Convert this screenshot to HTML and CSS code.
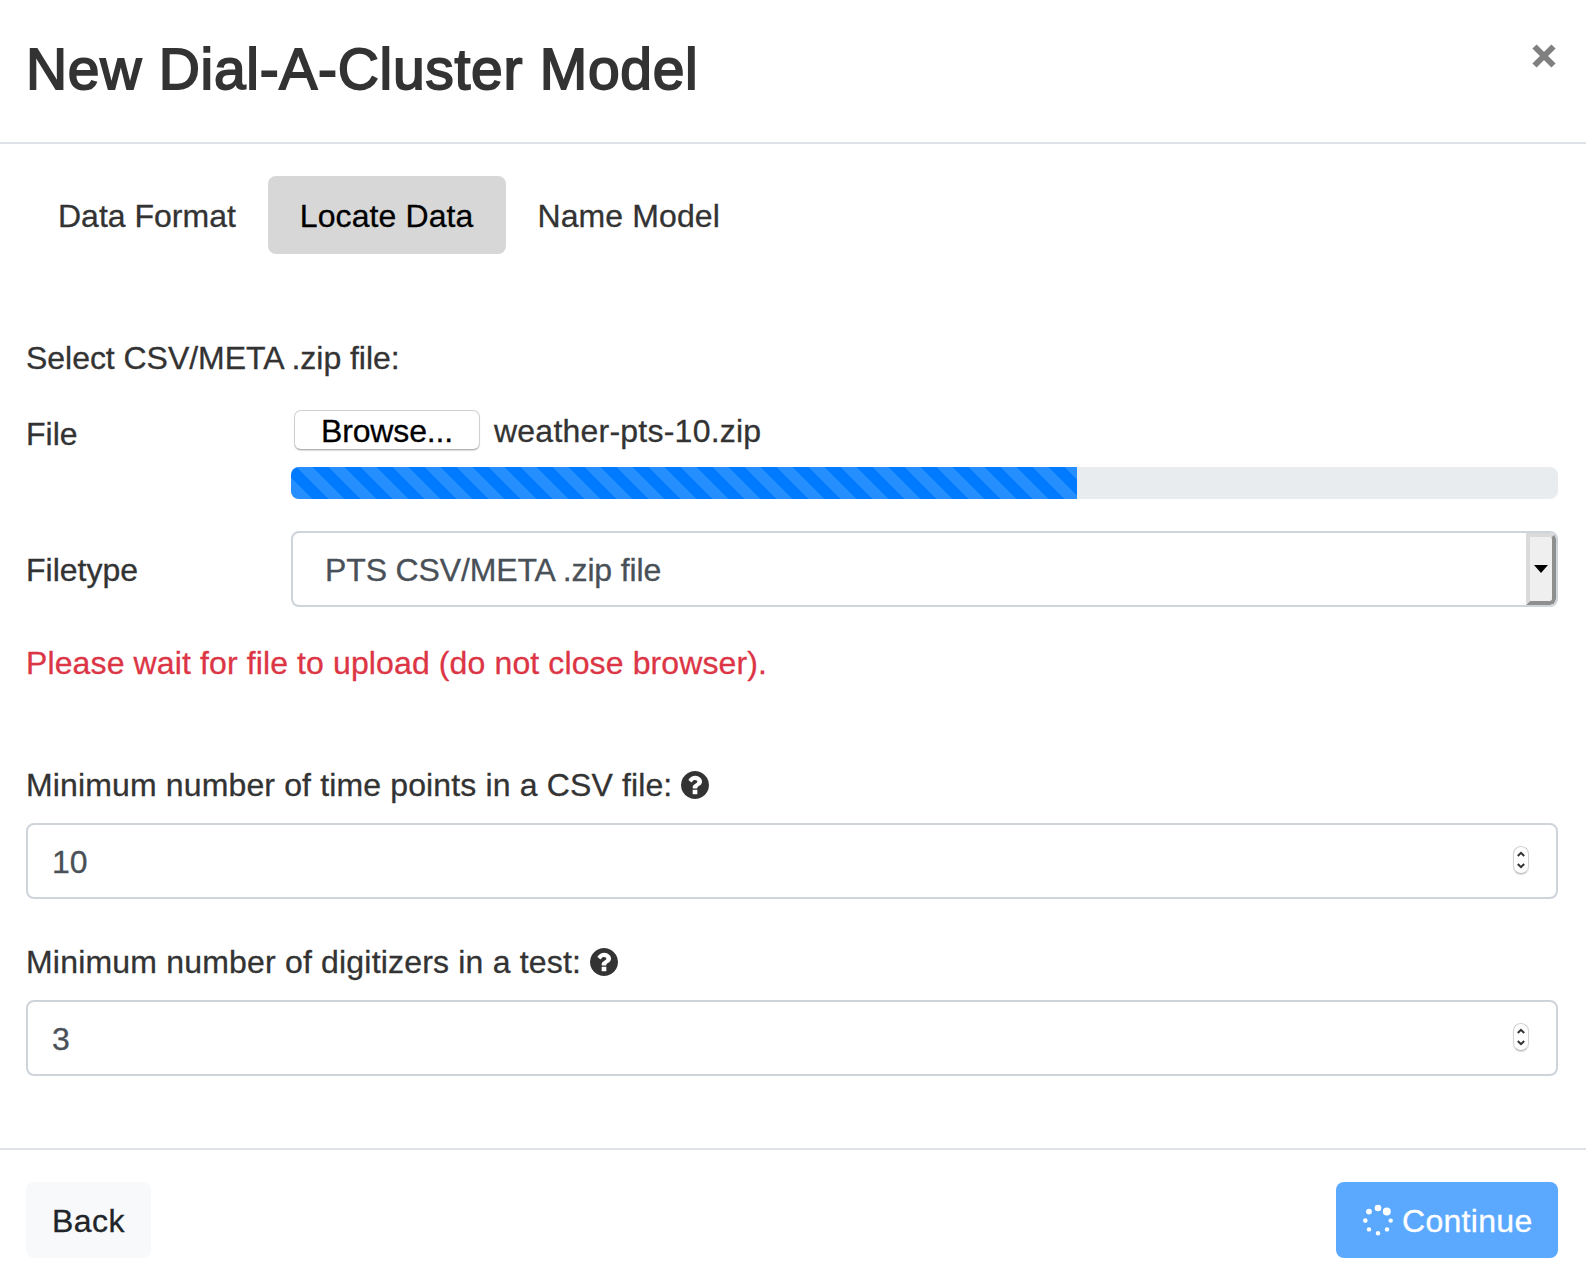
FILE: index.html
```html
<!DOCTYPE html>
<html lang="en">
<head>
<meta charset="utf-8">
<title>New Dial-A-Cluster Model</title>
<link rel="stylesheet" href="styles.css">
</head>
<body>
<div class="modal">
  <header class="modal-header">
    <h1 class="modal-title">New Dial-A-Cluster Model</h1>
    <button class="close" aria-label="Close"><svg width="24" height="24" viewBox="0 0 24 24"><path d="M2.500 2.500L21.500 21.500M21.500 2.500L2.500 21.500" stroke="#808080" stroke-width="6" fill="none"/></svg></button>
  </header>
  <main class="modal-body">
    <nav class="pills">
      <a class="pill format">Data Format</a>
      <a class="pill active">Locate Data</a>
      <a class="pill">Name Model</a>
    </nav>
    <p class="prompt">Select CSV/META .zip file:</p>
    <div class="row file-row">
      <span class="row-label">File</span>
      <div>
        <div class="file-input"><button class="browse">Browse...</button><span class="file-name">weather-pts-10.zip</span></div>
        <div class="progress"><div class="progress-bar" style="width: 62.04%"></div></div>
      </div>
    </div>
    <div class="row type-row">
      <span class="row-label">Filetype</span>
      <div class="select">
        <span class="select-value">PTS CSV/META .zip file</span>
        <span class="select-button"><svg width="14" height="8" viewBox="0 0 14 8"><path d="M0 0H14L7 8Z"/></svg></span>
      </div>
    </div>
    <p class="warning">Please wait for file to upload (do not close browser).</p>
    <div class="group">
      <label class="label points"><span>Minimum number of time points in a CSV file:</span><svg class="help" viewBox="128 128 1536 1536"><use href="#question"/></svg></label>
      <div class="number"><span>10</span><span class="stepper"><svg width="8" height="18" viewBox="0 0 8 18"><path d="M0.800 5L4 1.800L7.200 5M0.800 13L4 16.200L7.200 13"/></svg></span></div>
    </div>
    <div class="group">
      <label class="label digitizers"><span>Minimum number of digitizers in a test:</span><svg class="help" viewBox="128 128 1536 1536"><path id="question" d="M1024 1376v-192q0-14-9-23t-23-9h-192q-14 0-23 9t-9 23v192q0 14 9 23t23 9h192q14 0 23-9t9-23zm256-672q0-88-55.500-163t-138.500-116-170-41q-243 0-371 213-15 24 8 42l132 100q7 6 19 6 16 0 25-12 53-68 86-92 34-24 86-24 48 0 85.500 26t37.500 59q0 38-20 61t-68 45q-63 28-115.500 86.500t-52.500 125.500v36q0 14 9 23t23 9h192q14 0 23-9t9-23q0-19 21.500-49.500t54.500-49.500q32-18 49-28.500t46-35 44.500-48 28-60.500 12.500-81zm384 192q0 209-103 385.500t-279.500 279.500-385.500 103-385.500-103-279.500-279.500-103-385.500 103-385.500 279.500-279.500 385.500-103 385.500 103 279.500 279.500 103 385.500z"/></svg></label>
      <div class="number"><span>3</span><span class="stepper"><svg width="8" height="18" viewBox="0 0 8 18"><path d="M0.800 5L4 1.800L7.200 5M0.800 13L4 16.200L7.200 13"/></svg></span></div>
    </div>
  </main>
  <footer class="modal-footer">
    <button class="btn back"><span>Back</span></button>
    <button class="btn continue">
      <svg width="32" height="32" viewBox="0 0 32 32" fill="#fff"><circle cx="16" cy="4" r="3.300"/><circle cx="24.800" cy="7.600" r="4"/><circle cx="28.700" cy="16.600" r="2.200"/><circle cx="25" cy="25.400" r="2.200"/><circle cx="16" cy="29.300" r="2.200"/><circle cx="7" cy="25.400" r="2.200"/><circle cx="3.300" cy="16.600" r="2.300"/><circle cx="7" cy="7.600" r="2.900"/></svg>
      <span>Continue</span>
    </button>
  </footer>
</div>
</body>
</html>
```
FILE: styles.css
```css
* { box-sizing: border-box; }
body {
  margin: 0;
  background: #fff;
  color: #333;
  font: 32px/48px "Liberation Sans", Arial, sans-serif;
  -webkit-text-stroke: 0.3px currentColor;
}
button { font: inherit; border: 0; background: none; padding: 0; margin: 0; }
p { margin: 0; }
.modal { width: 1586px; height: 1284px; display: flex; flex-direction: column; overflow: hidden; }

.modal-header {
  height: 144px;
  padding: 27px 30px 0 26px;
  display: flex;
  justify-content: space-between;
  align-items: flex-start;
  border-bottom: 2px solid #dee2e6;
}
.modal-title {
  margin: 0;
  font-size: 57px;
  line-height: 84px;
  font-weight: 400;
  letter-spacing: 0.7px;
  -webkit-text-stroke: 1.8px #333;
}
.close { display: flex; margin-top: 17px; }

.modal-body { flex: 1; padding: 32px 28px 0 26px; }
.pills { display: flex; height: 78px; margin-bottom: 80px; }
.pill { padding: 16px 32px 14px; border-radius: 8px; letter-spacing: 0.1px; }
.pill.format { letter-spacing: 0; }
.pill.active { background: #d7d7d7; color: #000; }
.prompt { height: 48px; margin-bottom: 28px; letter-spacing: -0.04px; }

.row { display: grid; grid-template-columns: 265px 1fr; }
.file-input { display: flex; height: 57px; padding-left: 3px; }
.browse {
  width: 186px;
  height: 40px;
  line-height: 40px;
  margin-right: 14px;
  letter-spacing: -0.15px;
  color: #000;
  background: #fff;
  border: 1px solid #d0d0d0;
  border-bottom-color: #b4b4b4;
  border-radius: 7px;
  box-shadow: 0 1px 1px rgba(0, 0, 0, 0.15);
}
.file-name { margin-top: -3px; letter-spacing: 0.23px; }
.progress { height: 32px; border-radius: 8px; background: #e9ecef; overflow: hidden; }
.progress-bar {
  height: 100%;
  background-color: #007bff;
  background-image: linear-gradient(45deg, rgba(255, 255, 255, .15) 25%, transparent 25%, transparent 50%, rgba(255, 255, 255, .15) 50%, rgba(255, 255, 255, .15) 75%, transparent 75%, transparent);
  background-size: 32px 32px;
  background-position: 5px 0;
}
.type-row { margin-top: 32px; }
.type-row .row-label { padding-top: 15px; }
.select {
  height: 76px;
  display: flex;
  justify-content: space-between;
  border: 2px solid #ced4da;
  border-radius: 8px;
  color: #495057;
  overflow: hidden;
}
.select-value { padding: 13px 0 0 32px; letter-spacing: -0.13px; }
.select-button {
  width: 30px;
  display: flex;
  align-items: center;
  justify-content: center;
  background: #efefef;
  border: 4px solid;
  border-color: #dadada #8f8f8f #8f8f8f #dadada;
  border-bottom-right-radius: 6px;
  border-top-right-radius: 6px;
}
.warning { margin-top: 32px; height: 48px; color: #dc3545; letter-spacing: 0.12px; }

.group { margin-top: 39px; }
.warning + .group { margin-top: 74px; }
.label { display: flex; height: 62px; }
.points { letter-spacing: 0.14px; }
.digitizers { letter-spacing: 0.19px; }
.help { width: 28px; height: 28px; margin: 9.500px 0 0 9px; fill: #333; stroke: none; }
.number {
  height: 76px;
  padding: 13px 27px 0 24px;
  display: flex;
  justify-content: space-between;
  border: 2px solid #ced4da;
  border-radius: 8px;
  color: #495057;
}
.stepper {
  width: 16px;
  height: 28px;
  margin-top: 8px;
  display: flex;
  align-items: center;
  justify-content: center;
  border: 1px solid #d2d2d2;
  border-bottom-color: #b8b8b8;
  border-radius: 8px;
  box-shadow: 0 1px 1px rgba(0, 0, 0, 0.15);
}
.stepper path { fill: none; stroke: #333; stroke-width: 2; }

.modal-footer {
  height: 136px;
  padding: 32px 28px 0 26px;
  display: flex;
  justify-content: space-between;
  border-top: 2px solid #dee2e6;
}
.btn { height: 76px; border-radius: 8px; display: flex; align-items: center; }
.btn span { padding-top: 2px; }
.back { width: 125px; justify-content: center; background: #f8f9fa; color: #212529; letter-spacing: 0.5px; }
.continue { width: 222px; padding-left: 26px; gap: 8px; background: #5aa9ff; color: #fff; letter-spacing: 0.3px; }
```
